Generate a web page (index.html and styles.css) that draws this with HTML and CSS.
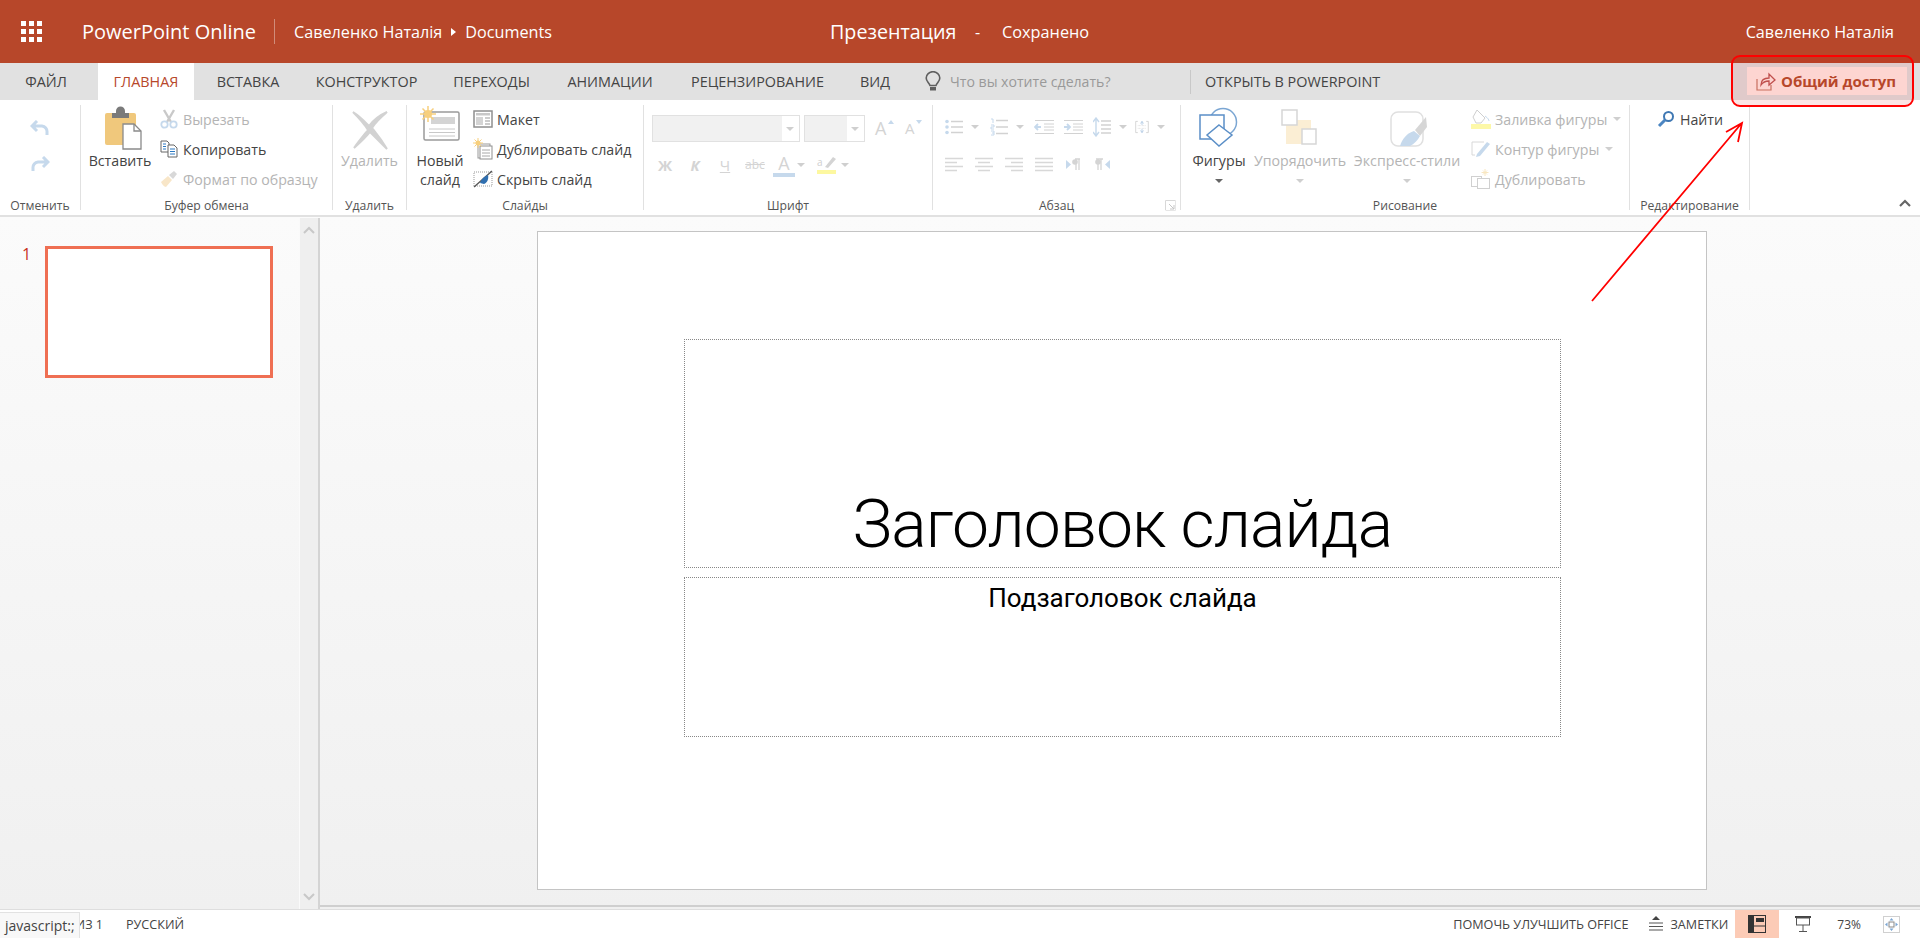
FILE: index.html
```html
<!DOCTYPE html>
<html lang="ru">
<head>
    <meta charset="UTF-8">
    <title>PowerPoint Online</title>
    <link rel="stylesheet" href="styles.css">
</head>
<body>
    <header class="topbar">
        <div class="waffle">
            <i></i><i></i><i></i><i></i><i></i><i></i><i></i><i></i><i></i>
        </div>
        <div class="app-name">PowerPoint Online</div>
        <div class="crumbs">
            <span>Савеленко Наталія</span>
            <span class="crumb-arrow"></span>
            <span>Documents</span>
        </div>
        <div class="doc-title">
            <span class="doc-name">Презентация</span>
            <span class="doc-dash">-</span>
            <span class="doc-state">Сохранено</span>
        </div>
        <div class="user-name">Савеленко Наталія</div>
    </header>

    <nav class="tabs">
        <div class="tab tab-file">ФАЙЛ</div>
        <div class="tab tab-home">ГЛАВНАЯ</div>
        <div class="tab tab-insert">ВСТАВКА</div>
        <div class="tab tab-design">КОНСТРУКТОР</div>
        <div class="tab tab-trans">ПЕРЕХОДЫ</div>
        <div class="tab tab-anim">АНИМАЦИИ</div>
        <div class="tab tab-review">РЕЦЕНЗИРОВАНИЕ</div>
        <div class="tab tab-view">ВИД</div>
        <div class="tell-me">
            <svg width="16" height="22" viewBox="0 0 16 22"><path d="M5 14.5C4 11.5 1.2 10.500 1.2 7A6.800 6.300 0 0 1 14.800 7C14.800 10.500 12 11.500 11 14.500Z" fill="none" stroke="#5f5f5f" stroke-width="1.600"/><path d="M5 16h6v3.500H5z" fill="#5f5f5f"/></svg>
            <span>Что вы хотите сделать?</span>
        </div>
        <div class="tab-sep"></div>
        <div class="tab tab-open">ОТКРЫТЬ В POWERPOINT</div>
        <div class="share-btn">
            <svg width="20" height="20" viewBox="0 0 20 20"><path d="M1 8v11h14v-5" fill="none" stroke="#c9705f" stroke-width="1.200"/><path d="M5 14c0-5 3-7 8-7V3l6 6-6 5V10c-3 0-6 1-8 4Z" fill="none" stroke="#c0504d" stroke-width="1.300"/></svg>
            <span>Общий доступ</span>
        </div>
    </nav>

    <section class="ribbon">
        <div class="group group-undo">
            <div class="group-body undo-body">
                <svg width="20" height="18" viewBox="0 0 20 18"><path d="M7 1 2 6l5 5M2 6h10a5.500 5.500 0 0 1 5 6v3" fill="none" stroke="#c6d9ec" stroke-width="3"/></svg>
                <svg width="20" height="18" viewBox="0 0 20 18"><path d="M13 1l5 5-5 5M18 6H8a5.500 5.500 0 0 0-5 6v3" fill="none" stroke="#c6d9ec" stroke-width="3"/></svg>
            </div>
            <div class="group-label">Отменить</div>
        </div>

        <div class="group group-clip">
            <div class="group-body">
                <div class="large paste">
                    <svg width="38" height="47" viewBox="0 0 38 47">
                        <rect x="1" y="8" width="31" height="32" rx="2" fill="#f0c87c"/>
                        <path d="M8 8h4V6a4 4 0 0 1 9 0v2h4v5H8z" fill="#7a7a7a"/>
                        <path d="M19 19h11l7 7v18H19z" fill="#fff" stroke="#8a8a8a" stroke-width="1.300"/>
                        <path d="M30 19v7h7" fill="none" stroke="#8a8a8a" stroke-width="1.300"/>
                    </svg>
                    <span>Вставить</span>
                </div>
                <div class="rows">
                    <div class="row off">
                        <svg width="18" height="20" viewBox="0 0 18 20"><path d="M4 1l7 12M14 1 7 13" stroke="#c9c9c9" stroke-width="2.400" fill="none"/><circle cx="4.500" cy="15.500" r="3.200" fill="none" stroke="#c6d9ec" stroke-width="1.800"/><circle cx="13.500" cy="15.500" r="3.200" fill="none" stroke="#c6d9ec" stroke-width="1.800"/></svg>
                        <span>Вырезать</span>
                    </div>
                    <div class="row">
                        <svg width="18" height="20" viewBox="0 0 18 20"><path d="M1 2h6l2 2v9H1z" fill="#fff" stroke="#666"/><path d="M8 6h6l3 3v9H8z" fill="#fff" stroke="#666"/><path d="M3 5h3M3 7.500h3M3 10h3" stroke="#2b79c2"/><path d="M10 10h5M10 12.500h5M10 15h5" stroke="#2b79c2"/></svg>
                        <span>Копировать</span>
                    </div>
                    <div class="row off">
                        <svg width="18" height="20" viewBox="0 0 18 20"><path d="M1 13 8 7l4 4-6 7c-2 0-4-3-5-5Z" fill="#f8e6c8"/><path d="M9 6l5-4 3 3-4 5z" fill="#d8d8d8"/></svg>
                        <span>Формат по образцу</span>
                    </div>
                </div>
            </div>
            <div class="group-label">Буфер обмена</div>
        </div>

        <div class="group group-delete">
            <div class="group-body center-body">
                <div class="large off">
                    <svg width="38" height="47" viewBox="0 0 38 47"><path d="M2 7c8 5 13 11 16 14 3-4 9-10 18-14-7 6-12 11-15 16 4 5 9 11 15 21-7-7-12-12-17-17-4 5-9 10-16 16 5-7 10-13 14-18C14 20 8 13 2 7Z" fill="#d2d2d2" stroke="#d2d2d2" stroke-width="2"/></svg>
                    <span>Удалить</span>
                </div>
            </div>
            <div class="group-label">Удалить</div>
        </div>

        <div class="group group-slides">
            <div class="group-body">
                <div class="large newslide">
                    <svg width="40" height="47" viewBox="0 0 40 47">
                        <rect x="4" y="7" width="35" height="28" rx="1.500" fill="#fff" stroke="#9a9a9a" stroke-width="1.500"/>
                        <rect x="11" y="12" width="24" height="7" fill="#d4d4d4"/>
                        <path d="M9 24h26M9 27.500h26M9 31h26" stroke="#c8c8c8"/>
                        <circle cx="8" cy="9" r="4" fill="#f7cf7d"/>
                        <path d="M8 1v16M0 9h16M2.500 3.500l11 11M13.500 3.500l-11 11" stroke="#f7cf7d" stroke-width="1.500"/>
                    </svg>
                    <span>Новый<br>слайд</span>
                </div>
                <div class="rows">
                    <div class="row">
                        <svg width="20" height="20" viewBox="0 0 20 20"><rect x="1" y="2" width="18" height="16" fill="#fff" stroke="#8f8f8f" stroke-width="1.500"/><rect x="3" y="4" width="14" height="2.500" fill="#c8c8c8"/><rect x="3" y="8" width="7" height="8" fill="#d4d4d4"/><path d="M12 9h5M12 12h5M12 15h5" stroke="#999"/></svg>
                        <span>Макет</span>
                    </div>
                    <div class="row">
                        <svg width="20" height="22" viewBox="0 0 20 22"><rect x="5" y="6" width="12" height="14" fill="#fff" stroke="#999"/><rect x="7" y="8" width="12" height="13" fill="#fff" stroke="#8f8f8f"/><path d="M9 12h8M9 15h8M9 18h8" stroke="#a8a8a8"/><circle cx="5" cy="5" r="2.500" fill="#f7cf7d"/><path d="M5 0v10M0 5h10M1.500 1.500l7 7M8.500 1.500l-7 7" stroke="#f7cf7d"/></svg>
                        <span>Дублировать слайд</span>
                    </div>
                    <div class="row">
                        <svg width="20" height="20" viewBox="0 0 20 20"><rect x="1" y="3" width="18" height="14" fill="#fff" stroke="#999" stroke-dasharray="1 1"/><path d="M1 18 19 2" stroke="#555" stroke-width="1.400"/><path d="M7 14c2-5 5-7 8-8 1 4-1 8-4 9z" fill="#2f6fb0"/></svg>
                        <span>Скрыть слайд</span>
                    </div>
                </div>
            </div>
            <div class="group-label">Слайды</div>
        </div>

        <div class="group group-font">
            <div class="group-body stack">
                <div class="font-row1">
                    <div class="combo combo-name"><b class="caret"></b></div>
                    <div class="combo combo-size"><b class="caret"></b></div>
                    <div class="grow-a">A<b class="up"></b></div>
                    <div class="shrink-a">A<b class="down"></b></div>
                </div>
                <div class="font-row2">
                    <span class="f-btn f-bold">Ж</span>
                    <span class="f-btn f-ital">К</span>
                    <span class="f-btn f-under">Ч</span>
                    <span class="f-btn f-strike">abc</span>
                    <span class="f-btn f-color">A</span>
                    <b class="caret"></b>
                    <svg class="f-mark" width="22" height="22" viewBox="0 0 22 22"><path d="M9 13 17 3l3 2-8 9z" fill="#d4d4d4"/><text x="1" y="12" font-size="10" fill="#cfcfcf" font-family="Open Sans, sans-serif">a</text><rect x="1" y="16" width="19" height="4" fill="#fdf8a0"/></svg>
                    <b class="caret"></b>
                </div>
            </div>
            <div class="group-label">Шрифт</div>
        </div>

        <div class="group group-para">
            <div class="group-body stack">
                <div class="para-row1">
                    <div class="para-btn w45">
                        <svg width="18" height="16" viewBox="0 0 18 16"><path d="M6 2.500h12M6 8h12M6 13.500h12" stroke="#d2d2d2" stroke-width="1.500"/><circle cx="2" cy="2.500" r="1.800" fill="#c6d9ec"/><circle cx="2" cy="8" r="1.800" fill="#c6d9ec"/><circle cx="2" cy="13.500" r="1.800" fill="#c6d9ec"/></svg>
                        <b class="caret"></b>
                    </div>
                    <div class="para-btn w44">
                        <svg width="18" height="18" viewBox="0 0 18 18"><path d="M6 2.500h12M6 9h12M6 15.500h12" stroke="#d2d2d2" stroke-width="1.500"/><path d="M1 1h2v4M1 7h3v2H1v2h3M1 13h3v4H1M2 15h2" fill="none" stroke="#c6d9ec"/></svg>
                        <b class="caret"></b>
                    </div>
                    <div class="para-btn w29">
                        <svg width="20" height="16" viewBox="0 0 20 16"><path d="M1 1.500h19M10 5h10M10 8h10M10 11h10M1 14.500h19" stroke="#d2d2d2"/><path d="M7 8H1m3-3L1 8l3 3" fill="none" stroke="#c6d9ec" stroke-width="1.800"/></svg>
                    </div>
                    <div class="para-btn w30">
                        <svg width="20" height="16" viewBox="0 0 20 16"><path d="M1 1.500h19M10 5h10M10 8h10M10 11h10M1 14.500h19" stroke="#d2d2d2"/><path d="M1 8h6M4 5l3 3-3 3" fill="none" stroke="#c6d9ec" stroke-width="1.800"/></svg>
                    </div>
                    <div class="para-btn w42">
                        <svg width="18" height="20" viewBox="0 0 18 20"><path d="M8 4h10M8 8h10M8 12h10M8 16h10" stroke="#d2d2d2" stroke-width="1.300"/><path d="M3 2v16M0 5l3-4 3 4M0 15l3 4 3-4" fill="none" stroke="#c6d9ec" stroke-width="1.400"/></svg>
                        <b class="caret"></b>
                    </div>
                    <div class="para-btn w30">
                        <svg width="20" height="18" viewBox="0 0 20 18"><path d="M4 1H1v16h3M16 1h3v16h-3" fill="none" stroke="#cfcfcf" stroke-width="1.200"/><path d="M4 7h12M4 11h12" stroke="#cfcfcf" stroke-dasharray="1 1"/><path d="M10 1v5M10 12v5M8 4l2-3 2 3M8 14l2 3 2-3" fill="none" stroke="#b8cfe6" stroke-width="1.400"/></svg>
                        <b class="caret"></b>
                    </div>
                </div>
                <div class="para-row2">
                    <div class="para-btn w30"><svg width="18" height="16" viewBox="0 0 18 16"><path d="M0 1.500h18M0 5.500h12M0 9.500h18M0 13.500h12" stroke="#d8d8d8" stroke-width="1.300"/></svg></div>
                    <div class="para-btn w30"><svg width="18" height="16" viewBox="0 0 18 16"><path d="M0 1.500h18M3 5.500h12M0 9.500h18M3 13.500h12" stroke="#d8d8d8" stroke-width="1.300"/></svg></div>
                    <div class="para-btn w30"><svg width="18" height="16" viewBox="0 0 18 16"><path d="M0 1.500h18M6 5.500h12M0 9.500h18M6 13.500h12" stroke="#d8d8d8" stroke-width="1.300"/></svg></div>
                    <div class="para-btn w30"><svg width="18" height="16" viewBox="0 0 18 16"><path d="M0 1.500h18M0 5.500h18M0 9.500h18M0 13.500h18" stroke="#d8d8d8" stroke-width="1.300"/></svg></div>
                    <div class="para-btn w30"><svg width="16" height="14" viewBox="0 0 16 14"><path d="M1 2v9l5-4.500z" fill="#c6d9ec"/><path d="M10 1h5M11 1v11M14 1v11" stroke="#d4d4d4" stroke-width="1.300"/><circle cx="10" cy="4" r="2.800" fill="#d4d4d4"/></svg></div>
                    <div class="para-btn w30"><svg width="16" height="14" viewBox="0 0 16 14"><path d="M15 2v9l-5-4.500z" fill="#c6d9ec"/><path d="M1 1h7M3 1v11M6 1v11" stroke="#d4d4d4" stroke-width="1.300"/><circle cx="3" cy="4" r="2.800" fill="#d4d4d4"/></svg></div>
                </div>
            </div>
            <div class="group-label">Абзац</div>
            <svg class="launcher" width="11" height="11" viewBox="0 0 11 11"><path d="M.5 10V.5H10.500" fill="none" stroke="#d8d8d8"/><path d="M.5 10.500h10V.5" fill="none" stroke="#e6e6e6"/><path d="M4 4l5 5M5 9h4V5" fill="none" stroke="#c6c6c6"/></svg>
        </div>

        <div class="group group-draw">
            <div class="group-body">
                <div class="large shapes">
                    <svg width="40" height="47" viewBox="0 0 40 47">
                        <circle cx="24" cy="17" r="13.500" fill="#fff" stroke="#7ba6d3" stroke-width="1.500"/>
                        <rect x="1" y="10" width="24" height="24" fill="#fff" stroke="#5b8fc7" stroke-width="1.500"/>
                        <path d="M20 20 33 30 20 41 8 30Z" fill="#fff" stroke="#5b8fc7" stroke-width="1.500"/>
                    </svg>
                    <span>Фигуры</span>
                    <b class="caret caret-dark"></b>
                </div>
                <div class="large arrange off">
                    <svg width="38" height="47" viewBox="0 0 38 47">
                        <rect x="5" y="15" width="25" height="24" fill="#fbeed4"/>
                        <rect x="1" y="5" width="15" height="15" fill="#fff" stroke="#d6d6d6" stroke-width="1.500"/>
                        <rect x="21" y="24" width="14" height="15" fill="#fff" stroke="#d6d6d6" stroke-width="1.500"/>
                    </svg>
                    <span>Упорядочить</span>
                    <b class="caret"></b>
                </div>
                <div class="large styles-btn off">
                    <svg width="40" height="47" viewBox="0 0 40 47">
                        <rect x="2" y="7" width="32" height="34" rx="7" fill="#fff" stroke="#e0e0e0" stroke-width="1.500"/>
                        <path d="M26 25 37 12l1 10-7 9z" fill="#d6d6d6"/>
                        <path d="M11 41c2-7 7-13 14-15l6 5c-2 4-6 8-10 10z" fill="#c6d9ec"/>
                    </svg>
                    <span>Экспресс-стили</span>
                    <b class="caret"></b>
                </div>
                <div class="rows draw-rows">
                    <div class="row off">
                        <svg width="20" height="22" viewBox="0 0 20 22"><path d="M6 2l8 8-4 5H5L2 9z" fill="#fff" stroke="#cfcfcf"/><path d="M14 8c3 2 4 4 4 5" stroke="#c6d9ec" fill="none"/><rect x="0" y="16" width="20" height="5" fill="#fdf8a8"/></svg>
                        <span>Заливка фигуры</span>
                        <b class="caret"></b>
                    </div>
                    <div class="row off">
                        <svg width="20" height="20" viewBox="0 0 20 20"><path d="M1 3h12M1 3v13h3" fill="none" stroke="#d8d8d8"/><path d="M6 15 16 3l3 2L9 17l-4 1z" fill="#c6d9ec"/></svg>
                        <span>Контур фигуры</span>
                        <b class="caret"></b>
                    </div>
                    <div class="row off">
                        <svg width="20" height="22" viewBox="0 0 20 22"><rect x="0.500" y="8.500" width="10" height="10" fill="#fff" stroke="#d0d0d0"/><rect x="6.500" y="10.500" width="12" height="10" fill="#fff" stroke="#d0d0d0"/><path d="M14 1v7M10.500 4.500h7M12 2.500l4 4M16 2.500l-4 4" stroke="#f8e6c0"/></svg>
                        <span>Дублировать</span>
                    </div>
                </div>
            </div>
            <div class="group-label">Рисование</div>
        </div>

        <div class="group group-find">
            <div class="group-body">
                <div class="rows">
                    <div class="row">
                        <svg width="18" height="18" viewBox="0 0 18 18"><circle cx="11.500" cy="6.500" r="4.500" fill="#fff" stroke="#3f78b3" stroke-width="2"/><path d="M8 10 2 16" stroke="#4c86c2" stroke-width="3"/></svg>
                        <span>Найти</span>
                    </div>
                </div>
            </div>
            <div class="group-label">Редактирование</div>
        </div>

        <svg class="collapse" width="14" height="9" viewBox="0 0 14 9"><path d="M2 7l5-5 5 5" fill="none" stroke="#666" stroke-width="2.200"/></svg>
    </section>

    <main class="workspace">
        <aside class="thumbs">
            <div class="thumb-num">1</div>
            <div class="thumb"></div>
        </aside>
        <div class="vscroll">
            <svg width="12" height="8" viewBox="0 0 12 8"><path d="M1 7l5-5 5 5" fill="none" stroke="#c8c8c8" stroke-width="2"/></svg>
            <svg width="12" height="8" viewBox="0 0 12 8"><path d="M1 1l5 5 5-5" fill="none" stroke="#c8c8c8" stroke-width="2"/></svg>
        </div>
        <div class="stage">
            <div class="slide">
                <div class="ph ph-title">Заголовок слайда</div>
                <div class="ph ph-sub">Подзаголовок слайда</div>
            </div>
        </div>
    </main>

    <footer class="statusbar">
        <span class="slide-count">ИЗ 1</span>
        <span class="lang">РУССКИЙ</span>
        <div class="status-right">
            <span class="improve">ПОМОЧЬ УЛУЧШИТЬ OFFICE</span>
            <div class="notes">
                <svg width="16" height="18" viewBox="0 0 16 18"><path d="M8 1l4 4H4z" fill="#444"/><path d="M1 8h14M1 11.500h14M1 15h14" stroke="#555" stroke-width="1.200"/></svg>
                <span>ЗАМЕТКИ</span>
            </div>
            <div class="view-normal">
                <svg width="18" height="18" viewBox="0 0 18 18"><rect x="0.500" y="0.500" width="17" height="17" fill="none" stroke="#333"/><rect x="0" y="0" width="6" height="18" fill="#333"/><rect x="8" y="3" width="8" height="4" fill="#333"/><path d="M6 11h12" stroke="#333"/></svg>
            </div>
            <div class="view-show">
                <svg width="18" height="18" viewBox="0 0 18 18"><path d="M1 2h16" stroke="#444" stroke-width="2"/><rect x="2.500" y="3" width="13" height="7" fill="none" stroke="#555"/><path d="M9 10v6M5 16.500h8" stroke="#555"/></svg>
            </div>
            <span class="zoom-val">73%</span>
            <div class="fit">
                <svg width="17" height="17" viewBox="0 0 17 17"><rect x="0.500" y="0.500" width="16" height="16" fill="#fff" stroke="#d0d0d0"/><rect x="6" y="6" width="5" height="5" fill="none" stroke="#888"/><path d="M8.500 2l2 2.500h-4zM8.500 15l2-2.500h-4zM2 8.500l2.500-2v4zM15 8.500l-2.500-2v4z" fill="#7ba6d3"/></svg>
            </div>
        </div>
    </footer>

    <div class="url-tip">javascript:;</div>
    <div class="callout"></div>
    <svg class="arrow" width="170" height="190" viewBox="0 0 170 190"><path d="M12 186 161 9M146 17 162 8 158 27" fill="none" stroke="#f00" stroke-width="1.800"/></svg>
</body>
</html>
```

FILE: styles.css
```css
* {
    box-sizing: border-box;
}

html, body {
    margin: 0;
    height: 100%;
    overflow: hidden;
}

body {
    font-family: "Open Sans", "Noto Sans", sans-serif;
    font-size: 14.2px;
    color: #444;
    background-color: white;
    display: flex;
    flex-direction: column;
    position: relative;
}

/* top bar */
.topbar {
    height: 63px;
    background-color: #b7472a;
    color: white;
    display: flex;
    align-items: center;
    position: relative;
    flex: none;
}

.waffle {
    width: 21px;
    height: 21px;
    margin-left: 21px;
    display: grid;
    grid-template-columns: repeat(3, 5px);
    grid-auto-rows: 5px;
    gap: 3px;
}

.waffle i {
    background-color: white;
}

.app-name {
    margin-left: 40px;
    font-size: 20px;
    width: 192px;
    white-space: nowrap;
}

.crumbs {
    border-left: 1px solid #d18c79;
    height: 25px;
    padding-left: 19px;
    font-size: 16.2px;
    display: flex;
    align-items: center;
    gap: 9px;
    white-space: nowrap;
}

.crumb-arrow {
    border-left: 5px solid white;
    border-top: 4px solid transparent;
    border-bottom: 4px solid transparent;
}

.doc-title {
    position: absolute;
    left: 830px;
    top: 0;
    height: 63px;
    display: flex;
    align-items: center;
    white-space: nowrap;
}

.doc-name {
    font-size: 19.7px;
    width: 145px;
}

.doc-dash {
    width: 27px;
    font-size: 16px;
}

.doc-state {
    font-size: 16.3px;
}

.user-name {
    margin-left: auto;
    margin-right: 26px;
    font-size: 16.2px;
    white-space: nowrap;
}

/* tabs */
.tabs {
    height: 37px;
    background-color: #e1e1e1;
    display: flex;
    align-items: center;
    font-size: 14.4px;
    flex: none;
    position: relative;
}

.tab {
    height: 37px;
    line-height: 37px;
    text-align: center;
    white-space: nowrap;
    color: #444;
}

.tab-file { width: 92px; }
.tab-home { width: 96px; margin-left: 6px; background-color: white; color: #b7472a; }
.tab-insert { width: 108px; }
.tab-design { width: 129px; }
.tab-trans { width: 121px; }
.tab-anim { width: 116px; }
.tab-review { width: 179px; }
.tab-view { width: 56px; }

.tell-me {
    margin-left: 22px;
    display: flex;
    align-items: center;
    gap: 9px;
    width: 265px;
    color: #999;
    font-size: 14.1px;
    white-space: nowrap;
}

.tab-sep {
    width: 1px;
    height: 24px;
    background-color: #c8c8c8;
}

.tab-open {
    margin-left: 14px;
    text-align: left;
}

.share-btn {
    position: absolute;
    left: 1747px;
    top: 4px;
    width: 160px;
    height: 28px;
    background-color: #fdd5d1;
    display: flex;
    align-items: center;
    padding-left: 9px;
    gap: 5px;
    color: #b7472a;
    font-weight: 700;
    font-size: 15px;
    white-space: nowrap;
    z-index: 2;
}

/* ribbon */
.ribbon {
    height: 117px;
    padding-top: 5px;
    border-bottom: 2px solid #e1e1e1;
    display: flex;
    flex: none;
    position: relative;
    background-color: white;
}

.group {
    height: 105px;
    border-right: 1px solid #e1e1e1;
    flex: none;
    position: relative;
}

.group-undo { width: 81px; }
.group-clip { width: 252px; }
.group-delete { width: 74px; }
.group-slides { width: 237px; }
.group-font { width: 289px; }
.group-para { width: 248px; }
.group-draw { width: 449px; }
.group-find { width: 120px; }

.group-body {
    height: 90px;
    display: flex;
}

.group-label {
    margin-top: 3px;
    line-height: 16px;
    font-size: 12.2px;
    text-align: center;
    color: #555;
    white-space: nowrap;
}

.undo-body {
    flex-direction: column;
    align-items: center;
    padding-top: 15px;
    gap: 18px;
}

.center-body {
    justify-content: center;
}

.large {
    display: flex;
    flex-direction: column;
    align-items: center;
    line-height: 19px;
    text-align: center;
    white-space: nowrap;
    color: #444;
    flex: none;
}

.large svg {
    margin-bottom: -1px;
}

.large .caret {
    margin-top: 9px;
}

.off,
.off span {
    color: #b4b4b4;
}

.rows {
    display: flex;
    flex-direction: column;
    margin-top: -1px;
}

.row {
    height: 30px;
    display: flex;
    align-items: center;
    gap: 5px;
    white-space: nowrap;
}

.row svg {
    flex: none;
}

.caret {
    display: block;
    flex: none;
    width: 0;
    height: 0;
    border-left: 4px solid transparent;
    border-right: 4px solid transparent;
    border-top: 4px solid #cfcfcf;
}

.caret-dark {
    border-top-color: #666;
}

.group-clip .group-body {
    padding-left: 8px;
}

.paste {
    width: 62px;
}

.paste svg {
    margin-left: 6px;
}

.group-clip .rows {
    margin-left: 9px;
}

.group-slides .group-body {
    padding-left: 10px;
}

.newslide {
    width: 46px;
}

.group-slides .rows {
    margin-left: 10px;
}

.group-slides .row {
    gap: 4px;
}

/* font group */
.stack {
    flex-direction: column;
}

.font-row1 {
    margin: 10px 0 0 8px;
    height: 27px;
    display: flex;
}

.combo {
    height: 27px;
    border: 1px solid #e1e1e1;
    background-color: #f1f1f1;
    margin-right: 4px;
    position: relative;
}

.combo::after {
    content: "";
    position: absolute;
    right: 0;
    top: 0;
    bottom: 0;
    width: 17px;
    background-color: white;
}

.combo .caret {
    position: absolute;
    right: 5px;
    top: 11px;
    z-index: 1;
}

.combo-name { width: 148px; }
.combo-size { width: 61px; }

.grow-a,
.shrink-a {
    line-height: 27px;
    color: #d4d4d4;
    position: relative;
}

.grow-a { margin-left: 6px; width: 30px; font-size: 18px; }
.shrink-a { font-size: 15px; width: 20px; }

.up, .down {
    position: absolute;
    top: 5px;
    left: 13px;
    border-left: 3px solid transparent;
    border-right: 3px solid transparent;
}

.up { border-bottom: 4px solid #c6d9ec; }
.down { border-top: 4px solid #c6d9ec; left: 11px; }

.font-row2 {
    margin: 11px 0 0 6px;
    height: 24px;
    display: flex;
    align-items: center;
}

.f-btn {
    width: 30px;
    text-align: center;
    color: #d4d4d4;
    font-size: 15px;
    line-height: 22px;
}

.f-bold { font-weight: 700; }
.f-ital { font-style: italic; font-weight: 700; }
.f-under { text-decoration: underline; }
.f-strike { text-decoration: line-through; font-size: 12px; }

.f-color {
    width: 22px;
    margin-left: 3px;
    margin-right: 2px;
    font-size: 18px;
    border-bottom: 4px solid #c6d9ec;
    line-height: 20px;
}

.f-mark {
    margin: 0 3px 0 11px;
}

/* paragraph group */
.para-row1,
.para-row2 {
    margin-left: 12px;
    height: 24px;
    display: flex;
}

.para-row1 { margin-top: 10px; }
.para-row2 { margin-top: 14px; }

.para-btn {
    display: flex;
    align-items: center;
    gap: 8px;
    flex: none;
}

.w29 { width: 29px; }
.w30 { width: 30px; }
.w42 { width: 42px; }
.w44 { width: 44px; }
.w45 { width: 45px; }

.launcher {
    position: absolute;
    right: 4px;
    bottom: -1px;
}

/* drawing group */
.group-draw .group-body {
    padding-left: 8px;
}

.shapes { width: 60px; margin-right: 5px; }
.arrange { width: 92px; margin-right: 7px; }
.styles-btn { width: 108px; }

.styles-btn svg {
    margin-left: 4px;
}

.draw-rows {
    margin-left: 10px;
}

.draw-rows .row {
    gap: 4px;
}

.draw-rows .caret {
    margin-left: 2px;
}

.group-find .group-body {
    padding-left: 27px;
}

.collapse {
    position: absolute;
    left: 1898px;
    top: 99px;
}

/* workspace */
.workspace {
    flex: 1;
    display: flex;
    min-height: 0;
    background: linear-gradient(#fbfbfb, #f0f0f0);
}

.thumbs {
    width: 299px;
    padding: 29px 0 0 22px;
    display: flex;
    align-items: flex-start;
    flex: none;
}

.thumb-num {
    width: 23px;
    color: #c8301e;
    font-size: 16px;
    line-height: 16px;
}

.thumb {
    width: 228px;
    height: 132px;
    border: 3px solid #ef6f53;
    background-color: white;
}

.vscroll {
    width: 21px;
    flex: none;
    background-color: #efefef;
    border-left: 1px solid #fafafa;
    border-right: 2px solid #d4d4d4;
    display: flex;
    flex-direction: column;
    align-items: center;
    justify-content: space-between;
    padding: 8px 0;
    margin-top: 1px;
}

.stage {
    flex: 1;
    padding: 14px 0 0 217px;
    border-bottom: 2px solid #cfcfcf;
    margin-bottom: 2px;
}

.slide {
    width: 1170px;
    height: 659px;
    background-color: white;
    border: 1px solid #c4c4c4;
    padding: 107px 0 0 146px;
}

.ph {
    width: 877px;
    border: 1px dotted #888;
    text-align: center;
    color: black;
    font-family: Roboto, sans-serif;
    white-space: nowrap;
}

.ph-title {
    height: 229px;
    font-size: 66px;
    font-weight: 300;
    letter-spacing: -0.9px;
    line-height: 78px;
    padding-top: 146px;
}

.ph-sub {
    height: 160px;
    margin-top: 9px;
    padding-top: 4px;
    font-size: 26px;
    line-height: 32px;
}

/* status bar */
.statusbar {
    height: 29px;
    border-top: 1px solid #dedede;
    display: flex;
    align-items: center;
    font-size: 12.6px;
    color: #444;
    flex: none;
    background-color: white;
}

.slide-count {
    width: 103px;
    text-align: right;
    white-space: nowrap;
}

.lang {
    margin-left: 23px;
}

.status-right {
    margin-left: auto;
    height: 100%;
    display: flex;
    align-items: center;
    padding-right: 20px;
    white-space: nowrap;
}

.notes {
    display: flex;
    align-items: center;
    gap: 7px;
    margin-left: 19px;
}

.view-normal {
    width: 44px;
    height: 100%;
    margin-left: 7px;
    background-color: #fccbb6;
    display: flex;
    align-items: center;
    justify-content: center;
}

.view-show {
    margin-left: 15px;
    display: flex;
}

.zoom-val {
    margin-left: 25px;
    font-size: 12px;
}

.fit {
    margin-left: 22px;
    display: flex;
}

/* overlays */
.url-tip {
    position: absolute;
    left: 0;
    bottom: 0;
    width: 80px;
    height: 26px;
    background-color: #f8f8f8;
    border: 1px solid #e2e2e2;
    border-left: none;
    border-bottom: none;
    padding-left: 5px;
    line-height: 26px;
    font-size: 14px;
    color: #444;
}

.callout {
    position: absolute;
    left: 1731px;
    top: 55px;
    width: 183px;
    height: 52px;
    border: 2px solid #f00;
    border-radius: 9px;
    background-color: rgba(220, 0, 0, 0.1);
}

.arrow {
    position: absolute;
    left: 1580px;
    top: 115px;
}
```
